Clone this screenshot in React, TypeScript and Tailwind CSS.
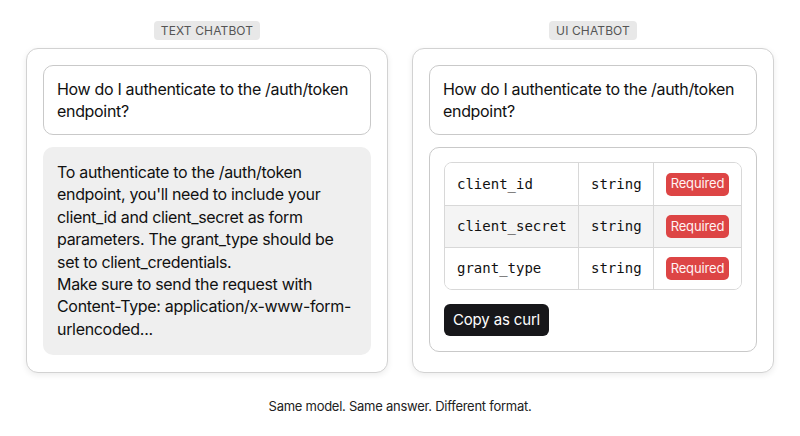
import React from "react";

const rows = [
  { name: "client_id", type: "string", alt: false },
  { name: "client_secret", type: "string", alt: true },
  { name: "grant_type", type: "string", alt: false },
];

function Label({ children }: { children: React.ReactNode }) {
  return (
    <div className="flex justify-center">
      <span className="rounded-[4px] bg-[#e8e8e8] px-[7px] h-[19px] flex items-center text-[12px] leading-none text-[#555] tracking-[0.01em]">
        {children}
      </span>
    </div>
  );
}

function Question() {
  return (
    <div className="rounded-[10px] border border-[#c9c9c9] bg-white px-[13px] py-[12px] text-[16px] leading-[22px] tracking-[-0.02em] whitespace-nowrap text-[#111]">
      How do I authenticate to the /auth/token
      <br />
      endpoint?
    </div>
  );
}

export default function App() {
  return (
    <div
      className="w-[800px] h-[436px] bg-white flex flex-col items-center pt-[21px]"
      style={{ fontFamily: "Inter, 'Noto Sans', sans-serif" }}
    >
      <div className="grid grid-cols-[362px_362px] gap-x-[24px] gap-y-[8px]">
        <Label>TEXT CHATBOT</Label>
        <Label>UI CHATBOT</Label>

        <div className="h-[325px] rounded-[12px] border border-[#d2d2d2] bg-white p-[16px] shadow-[0_2px_6px_rgba(0,0,0,0.08)] flex flex-col gap-[12px]">
          <Question />
          <div className="rounded-[10px] bg-[#efefef] px-[14px] pt-[14px] pb-[15px] text-[16px] leading-[22.4px] tracking-[-0.02em] whitespace-nowrap text-[#111]">
            To authenticate to the /auth/token
            <br />
            endpoint, you'll need to include your
            <br />
            client_id and client_secret as form
            <br />
            parameters. The grant_type should be
            <br />
            set to client_credentials.
            <br />
            Make sure to send the request with
            <br />
            Content-Type: application/x-www-form-
            <br />
            urlencoded...
          </div>
        </div>

        <div className="h-[325px] rounded-[12px] border border-[#d2d2d2] bg-white p-[16px] shadow-[0_2px_6px_rgba(0,0,0,0.08)] flex flex-col gap-[12px]">
          <Question />
          <div className="rounded-[10px] border border-[#c9c9c9] bg-white px-[14px] pt-[14px] pb-[15px] flex flex-col gap-[14px] items-start">
            <div className="w-[298px] rounded-[8px] border border-[#d8d8d8] overflow-hidden">
              {rows.map((r, i) => (
                <div
                  key={r.name}
                  className={
                    "grid grid-cols-[134px_75px_1fr] h-[42px] " +
                    (r.alt ? "bg-[#f4f4f4] " : "bg-white ") +
                    (i > 0 ? "border-t border-[#d8d8d8]" : "")
                  }
                >
                  <div
                    className="flex items-center px-[12px] text-[14px] text-[#111] border-r border-[#d8d8d8]"
                    style={{ fontFamily: "'DejaVu Sans Mono', 'Liberation Mono', monospace" }}
                  >
                    {r.name}
                  </div>
                  <div
                    className="flex items-center px-[12px] text-[14px] text-[#111] border-r border-[#d8d8d8]"
                    style={{ fontFamily: "'DejaVu Sans Mono', 'Liberation Mono', monospace" }}
                  >
                    {r.type}
                  </div>
                  <div className="flex items-center px-[12px]">
                    <span className="h-[23px] w-[63px] rounded-[5px] bg-[#dd4545] text-[#fff3f3] text-[13px] tracking-[-0.01em] flex items-center justify-center">
                      Required
                    </span>
                  </div>
                </div>
              ))}
            </div>
            <button className="h-[32px] w-[105px] rounded-[6px] bg-[#17171a] text-white text-[15px] tracking-[-0.01em] flex items-center justify-center">
              Copy as curl
            </button>
          </div>
        </div>
      </div>
      <div className="mt-[24px] text-[13px] tracking-[-0.02em] text-[#222]">
        Same model. Same answer. Different format.
      </div>
    </div>
  );
}
